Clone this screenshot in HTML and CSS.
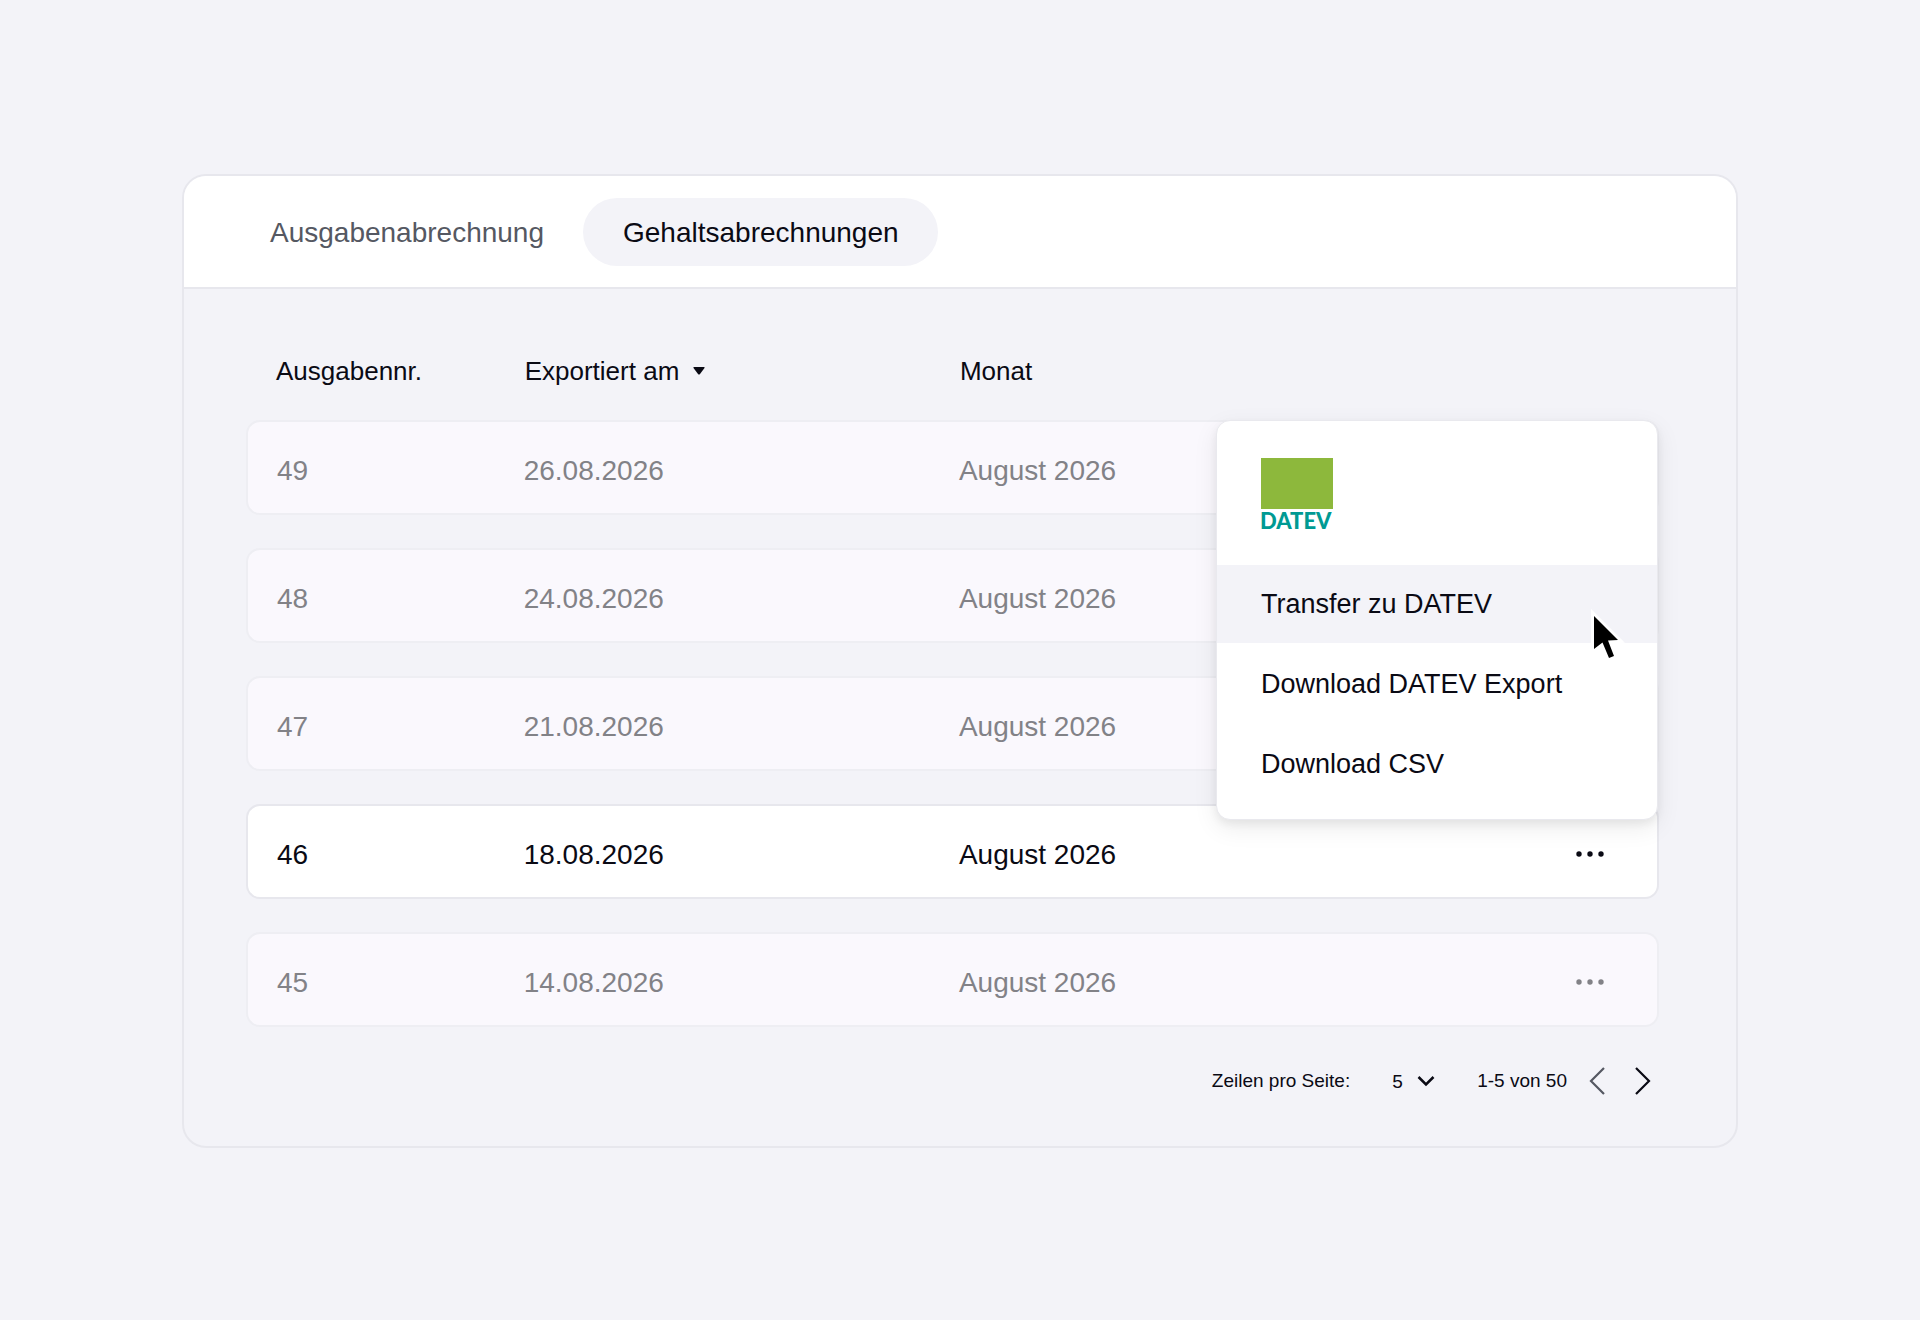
FILE: index.html
```html
<!DOCTYPE html>
<html lang="de">
<head>
  <meta charset="UTF-8">
  <meta name="viewport" content="width=device-width, initial-scale=1.0">
  <title>Gehaltsabrechnungen</title>
  <link rel="stylesheet" href="styles.css">
</head>
<body>
  <main class="card">
    <nav class="tabs">
      <a class="tab" href="#ausgaben">Ausgabenabrechnung</a>
      <a class="tab tab-active" href="#gehalt" aria-current="page">Gehaltsabrechnungen</a>
    </nav>

    <div class="content">
      <table class="exports">
        <thead>
          <tr>
            <th class="col-number">Ausgabennr.</th>
            <th class="col-date">
              <button class="sort">
                Exportiert am
                <svg width="12" height="8" viewBox="0 0 12 8"><path d="M1 0h10q1 0 .5 1L7 7q-1 1.200-2 0L.5 1Q0 0 1 0z" fill="currentColor"/></svg>
              </button>
            </th>
            <th>Monat</th>
            <th class="col-actions"></th>
          </tr>
        </thead>
        <tbody>
          <tr>
            <td>49</td>
            <td>26.08.2026</td>
            <td>August 2026</td>
            <td class="actions">
              <button class="more" aria-label="Aktionen"><svg width="28" height="6" viewBox="0 0 28 6" fill="currentColor"><circle cx="3" cy="3" r="2.700"/><circle cx="14" cy="3" r="2.700"/><circle cx="25" cy="3" r="2.700"/></svg></button>
            </td>
          </tr>
          <tr>
            <td>48</td>
            <td>24.08.2026</td>
            <td>August 2026</td>
            <td class="actions">
              <button class="more" aria-label="Aktionen"><svg width="28" height="6" viewBox="0 0 28 6" fill="currentColor"><circle cx="3" cy="3" r="2.700"/><circle cx="14" cy="3" r="2.700"/><circle cx="25" cy="3" r="2.700"/></svg></button>
            </td>
          </tr>
          <tr>
            <td>47</td>
            <td>21.08.2026</td>
            <td>August 2026</td>
            <td class="actions">
              <button class="more" aria-label="Aktionen"><svg width="28" height="6" viewBox="0 0 28 6" fill="currentColor"><circle cx="3" cy="3" r="2.700"/><circle cx="14" cy="3" r="2.700"/><circle cx="25" cy="3" r="2.700"/></svg></button>
            </td>
          </tr>
          <tr class="row-active">
            <td>46</td>
            <td>18.08.2026</td>
            <td>August 2026</td>
            <td class="actions">
              <button class="more" aria-label="Aktionen"><svg width="28" height="6" viewBox="0 0 28 6" fill="currentColor"><circle cx="3" cy="3" r="2.700"/><circle cx="14" cy="3" r="2.700"/><circle cx="25" cy="3" r="2.700"/></svg></button>
              <div class="menu">
                <div class="menu-logo">
                  <svg width="76" height="72" viewBox="0 0 76 72">
                    <rect width="72" height="51" fill="#8db83c"/>
                    <text class="logo-text" x="-1" y="71">DATEV</text>
                  </svg>
                </div>
                <button class="menu-item menu-item-hover">
                  Transfer zu DATEV
                  <svg class="cursor" width="44" height="62" viewBox="-10 -10 44 62">
                    <path d="M0 0L24 24L14 24.500L20 40L15 42L8.500 26.500L0 33z" fill="none" stroke="#fff" stroke-width="6" stroke-miterlimit="10"/>
                    <path d="M0 0L24 24L14 24.500L20 40L15 42L8.500 26.500L0 33z" fill="#000"/>
                  </svg>
                </button>
                <button class="menu-item">Download DATEV Export</button>
                <button class="menu-item">Download CSV</button>
              </div>
            </td>
          </tr>
          <tr>
            <td>45</td>
            <td>14.08.2026</td>
            <td>August 2026</td>
            <td class="actions">
              <button class="more" aria-label="Aktionen"><svg width="28" height="6" viewBox="0 0 28 6" fill="currentColor"><circle cx="3" cy="3" r="2.700"/><circle cx="14" cy="3" r="2.700"/><circle cx="25" cy="3" r="2.700"/></svg></button>
            </td>
          </tr>
        </tbody>
      </table>

      <div class="pagination">
        <label for="page-size">Zeilen pro Seite:</label>
        <div class="page-size">
          <select id="page-size">
            <option>5</option>
            <option>10</option>
            <option>25</option>
          </select>
          <svg width="18" height="12" viewBox="0 0 18 12"><path d="M1.500 2L9 9.500L16.500 2" fill="none" stroke="currentColor" stroke-width="2.500"/></svg>
        </div>
        <div class="pager">
          <span>1-5 von 50</span>
          <button class="page-button" aria-label="Vorherige Seite" disabled><svg width="16" height="28" viewBox="0 0 16 28"><path d="M15 1L2 14L15 27" fill="none" stroke="currentColor" stroke-width="2.200"/></svg></button>
          <button class="page-button" aria-label="Nächste Seite"><svg width="16" height="28" viewBox="0 0 16 28"><path d="M1 1L14 14L1 27" fill="none" stroke="currentColor" stroke-width="2.200"/></svg></button>
        </div>
      </div>
    </div>
  </main>
</body>
</html>
```

FILE: styles.css
```css
* {
  box-sizing: border-box;
}
body {
  font-family: "Liberation Sans", Arial, sans-serif;
  font-size: 28px;
  color: #0a0a14;
  margin: 0;
  padding: 174px 182px;
  background-color: #f3f3f8;
}
button, select {
  font: inherit;
  color: inherit;
  background: none;
  border: none;
  padding: 0;
  cursor: pointer;
}
svg {
  display: block;
}
.card {
  border: 2px solid #e7e7ed;
  border-radius: 24px;
}

.tabs {
  display: flex;
  padding: 22px 46px 21px;
  background-color: #fff;
  border-bottom: 2px solid #e7e7ed;
  border-radius: 22px 22px 0 0;
}
.tab {
  padding: 1px 39px 0 40px;
  border-radius: 34px;
  line-height: 67px;
  color: #555862;
  text-decoration: none;
}
.tab-active {
  color: #0a0a14;
  background-color: #f3f3f8;
}

.content {
  padding: 33px 77px 44px 62px;
}
.exports {
  width: 100%;
  table-layout: fixed;
  border-collapse: separate;
  border-spacing: 0 33px;
}
.exports th {
  height: 32px;
  padding: 0 30px;
  font-size: 26px;
  font-weight: normal;
  line-height: 32px;
  text-align: left;
}
.col-number { width: 17.6%; }
.col-date { width: 30.8%; }
.exports .col-actions { width: 142px; }
.sort {
  display: flex;
  align-items: center;
  gap: 14px;
}
.exports td {
  height: 95px;
  padding: 6px 29px 0;
  color: #828287;
  background-color: #faf8fd;
  border: 0 solid #eeeef3;
  border-width: 2px 0;
}
.exports td:first-child {
  border-left-width: 2px;
  border-radius: 14px 0 0 14px;
}
.exports td:last-child {
  border-right-width: 2px;
  border-radius: 0 14px 14px 0;
}
.exports .row-active td {
  color: #0a0a14;
  background-color: #fff;
  border-color: #e7e7ed;
}
.exports .actions {
  position: relative;
  padding-top: 4px;
  padding-right: 45px;
}
.more {
  display: block;
  margin-left: auto;
  padding: 12px 8px;
}

.menu {
  position: absolute;
  right: -1px;
  bottom: 77px;
  z-index: 1;
  width: 442px;
  padding-bottom: 16px;
  background-color: #fff;
  border: 1px solid #e9e9ee;
  border-radius: 14px;
  box-shadow: 0 8px 24px rgba(0, 0, 0, 0.08), 0 4px 8px rgba(0, 0, 0, 0.06);
}
.menu-logo {
  padding: 37px 44px 35px;
}
.logo-text {
  font-family: Lato, sans-serif;
  font-size: 22px;
  font-weight: 900;
  fill: #009a93;
}
.menu-item {
  position: relative;
  display: block;
  width: 100%;
  height: 78px;
  padding: 0 44px;
  font-size: 27px;
  text-align: left;
}
.menu-item + .menu-item {
  margin-top: 2px;
}
.menu-item-hover {
  background-color: #f3f3f8;
}
.cursor {
  position: absolute;
  top: 41px;
  right: 29px;
  z-index: 1;
}

.pagination {
  display: flex;
  justify-content: flex-end;
  align-items: center;
  gap: 42px;
  height: 42px;
  font-size: 19px;
}
.page-size {
  display: grid;
  align-items: center;
}
.page-size select,
.page-size svg {
  grid-area: 1 / 1;
}
.page-size select {
  appearance: none;
  width: 43px;
}
.page-size svg {
  justify-self: end;
  pointer-events: none;
}
.pager {
  display: flex;
  align-items: center;
  gap: 14px;
}
.page-button {
  padding: 7px 8px;
}
.page-button:disabled {
  color: #555862;
}
```
